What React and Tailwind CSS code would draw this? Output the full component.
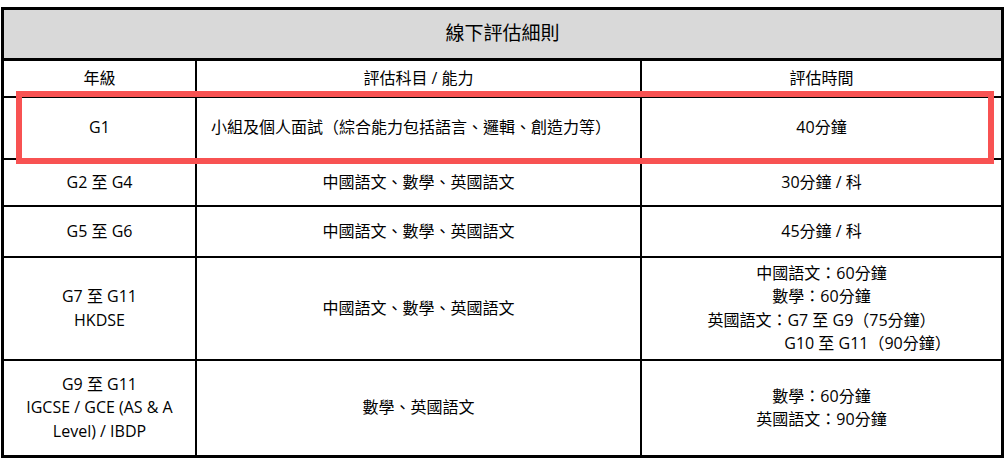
const rows = [
  {
    grade: ['G1'],
    subject: '小組及個人面試（綜合能力包括語言、邏輯、創造力等）',
    time: ['40分鐘'],
    h: 'h-[60px]',
    left: true,
  },
  { grade: ['G2 至 G4'], subject: '中國語文、數學、英國語文', time: ['30分鐘 / 科'], h: 'h-[45px]' },
  { grade: ['G5 至 G6'], subject: '中國語文、數學、英國語文', time: ['45分鐘 / 科'], h: 'h-[49px]' },
  {
    grade: ['G7 至 G11', 'HKDSE'],
    subject: '中國語文、數學、英國語文',
    time: ['中國語文：60分鐘', '數學：60分鐘', '英國語文：G7 至 G9（75分鐘）'],
    extra: 'G10 至 G11（90分鐘）',
    h: 'h-[101px]',
  },
  {
    grade: ['G9 至 G11', 'IGCSE / GCE (AS & A', 'Level) / IBDP'],
    subject: '數學、英國語文',
    time: ['數學：60分鐘', '英國語文：90分鐘'],
    h: 'h-[94px]',
    last: true,
  },
];

export default function App() {
  return (
    <div
      className="min-h-[464px] bg-white pt-[7px] pl-[1px] text-[16px] leading-[23.5px] text-black"
      style={{ fontFamily: '"Open Sans", "Noto Sans CJK TC", sans-serif' }}
    >
      <div className="relative w-[1003px] border-[3px] border-black">
        <div className="flex h-[51px] items-center justify-center border-b-[3px] border-black bg-[#d9d9d9] text-[19px]">
          線下評估細則
        </div>

        <div className="grid h-[37px] grid-cols-[193px_445px_1fr] border-b-2 border-black">
          <div className="flex items-center justify-center border-r-2 border-black">年級</div>
          <div className="flex items-center justify-center border-r-2 border-black">評估科目 / 能力</div>
          <div className="flex items-center justify-center">評估時間</div>
        </div>

        {rows.map((r, i) => (
          <div
            key={i}
            className={`grid grid-cols-[193px_445px_1fr] ${r.last ? '' : 'border-b-2 border-black'}`}
          >
            <div className={`flex flex-col items-center justify-center border-r-2 border-black text-center ${r.h}`}>
              {r.grade.map((g) => (
                <div key={g}>{g}</div>
              ))}
            </div>
            <div
              className={`flex items-center border-r-2 border-black ${r.left ? 'justify-start pl-[14px]' : 'justify-center'}`}
            >
              {r.subject}
            </div>
            <div className="flex flex-col justify-center text-center">
              {r.time.map((t) => (
                <div key={t}>{t}</div>
              ))}
              {r.extra && <div className="pl-[92px]">{r.extra}</div>}
            </div>
          </div>
        ))}

        <div className="pointer-events-none absolute left-[12px] top-[81px] h-[73px] w-[978px] border-[6px] border-[#f85252]" />
      </div>
    </div>
  );
}
